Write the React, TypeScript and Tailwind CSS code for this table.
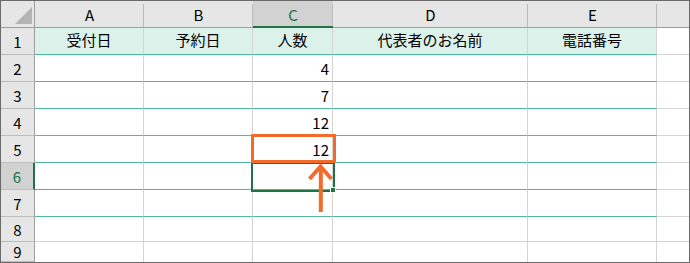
import React from "react";

const COLS = ["A", "B", "C", "D", "E"];
const HEADINGS = ["受付日", "予約日", "人数", "代表者のお名前", "電話番号"];
const GUESTS: Record<number, string> = { 2: "4", 3: "7", 4: "12", 5: "12" };
const ROWS = [1, 2, 3, 4, 5, 6, 7, 8, 9];

const ACTIVE_COL = "C";
const ACTIVE_ROW = 6;

export default function App() {
  return (
    <div className="relative w-[690px] h-[263px] overflow-hidden bg-white border border-[#6a6a6a] font-['Noto_Sans_CJK_JP','Noto_Sans',sans-serif] text-[15px] text-black">
      <div className="grid grid-cols-[34px_109px_109px_80px_195px_129px_1fr] grid-rows-[27px_27px_27px_27px_27px_27px_27px_27px_25px_1fr] h-full">
        {/* corner */}
        <div className="relative bg-[#e6e6e6] border-r border-b border-[#9e9e9e]">
          <svg className="absolute left-[14px] top-[6px]" width="18" height="18" viewBox="0 0 18 18">
            <polygon points="17,0 17,17 0,17" fill="#b4b4b4" />
          </svg>
        </div>

        {/* column letters */}
        {[...COLS, ""].map((c, i) => {
          const active = c === ACTIVE_COL;
          return (
            <div
              key={"h" + i}
              className={
                "relative flex items-center justify-center leading-none " +
                (active
                  ? "bg-[#d2d2d2] text-[#217346] border-b-2 border-[#217346] pt-[2px]"
                  : "bg-[#e6e6e6] border-b border-[#9e9e9e]")
              }
            >
              {c}
              {i < COLS.length && (
                <span className="absolute top-[3px] bottom-0 right-0 w-px bg-[#bcbcbc]" />
              )}
            </div>
          );
        })}

        {ROWS.map((r) => {
          const active = r === ACTIVE_ROW;
          const teal = r <= 7;
          const last = r === 9;
          return (
            <React.Fragment key={r}>
              <div
                className={
                  "flex items-center justify-center leading-none border-b border-[#bdbdbd] " +
                  (active
                    ? "bg-[#d2d2d2] text-[#217346] border-r-2 border-r-[#217346]"
                    : "bg-[#e6e6e6] border-r border-r-[#9e9e9e]")
                }
              >
                {r}
              </div>
              {COLS.map((c, ci) => (
                <div
                  key={c}
                  className={
                    "flex items-center leading-none border-r border-r-[#d4d4d4] " +
                    (last ? "" : teal ? "border-b border-b-[#4fb99c] " : "border-b border-b-[#d4d4d4] ") +
                    (r === 1 ? "bg-[#dbf2eb] justify-center pb-[3px] " : "justify-end pr-[3px] ")
                  }
                >
                  {r === 1 ? HEADINGS[ci] : c === "C" ? GUESTS[r] ?? "" : ""}
                </div>
              ))}
              <div className={last ? "" : "border-b border-[#d4d4d4]"} />
            </React.Fragment>
          );
        })}
      </div>

      {/* active cell C6 */}
      <div className="absolute left-[250px] top-[161px] w-[84px] h-[30px] border-2 border-[#217346]" />
      <div className="absolute left-[329px] top-[186px] w-[6px] h-[6px] bg-[#217346] border border-white" />

      {/* highlight on C5 */}
      <div className="absolute left-[250px] top-[133px] w-[85px] h-[29px] border-[3px] border-[#f36b2b]" />

      {/* arrow pointing up to C5 */}
      <svg className="absolute left-[300px] top-[155px]" width="40" height="60" viewBox="0 0 40 60">
        <polyline
          points="8.5,23 19.5,10.5 30.5,23"
          fill="none"
          stroke="#f36b2b"
          strokeWidth="4"
          strokeLinejoin="miter"
        />
        <line x1="19.8" y1="11" x2="19.8" y2="56" stroke="#f36b2b" strokeWidth="4" />
      </svg>
    </div>
  );
}
